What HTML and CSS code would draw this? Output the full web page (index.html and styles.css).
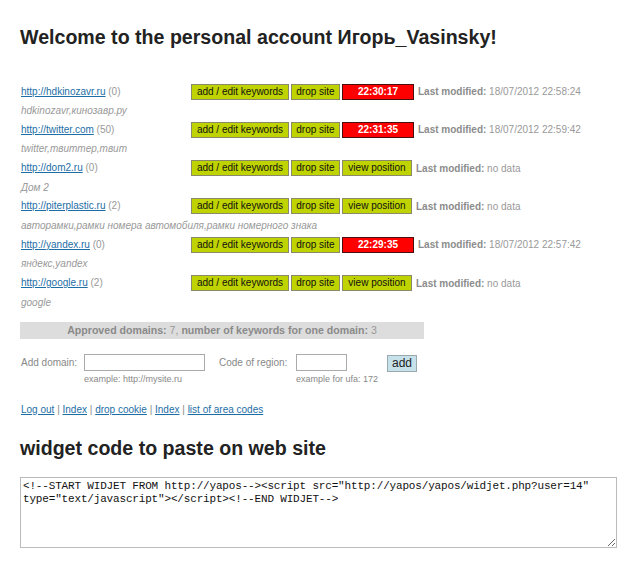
FILE: index.html
```html
<!DOCTYPE html>
<html lang="en">
<head>
<meta charset="utf-8">
<title>Personal account</title>
<link rel="stylesheet" href="styles.css">
</head>
<body>
<div class="page">
  <h1 class="title">Welcome to the personal account Игорь_Vasinsky!</h1>

  <div class="sites">
    <div class="site-row">
      <div class="url"><a href="#">http://hdkinozavr.ru</a> <span class="count">(0)</span></div>
      <div class="actions">
        <span class="btn btn-edit">add / edit keywords</span>
        <span class="btn btn-drop">drop site</span>
        <span class="btn time">22:30:17</span>
        <span class="modified"><b>Last modified:</b> 18/07/2012 22:58:24</span>
      </div>
    </div>
    <div class="keywords">hdkinozavr,кинозавр.ру</div>

    <div class="site-row">
      <div class="url"><a href="#">http://twitter.com</a> <span class="count">(50)</span></div>
      <div class="actions">
        <span class="btn btn-edit">add / edit keywords</span>
        <span class="btn btn-drop">drop site</span>
        <span class="btn time">22:31:35</span>
        <span class="modified"><b>Last modified:</b> 18/07/2012 22:59:42</span>
      </div>
    </div>
    <div class="keywords">twitter,твиттер,твит</div>

    <div class="site-row">
      <div class="url"><a href="#">http://dom2.ru</a> <span class="count">(0)</span></div>
      <div class="actions">
        <span class="btn btn-edit">add / edit keywords</span>
        <span class="btn btn-drop">drop site</span>
        <span class="btn view">view position</span>
        <span class="modified"><b>Last modified:</b> no data</span>
      </div>
    </div>
    <div class="keywords">Дом 2</div>

    <div class="site-row">
      <div class="url"><a href="#">http://piterplastic.ru</a> <span class="count">(2)</span></div>
      <div class="actions">
        <span class="btn btn-edit">add / edit keywords</span>
        <span class="btn btn-drop">drop site</span>
        <span class="btn view">view position</span>
        <span class="modified"><b>Last modified:</b> no data</span>
      </div>
    </div>
    <div class="keywords">авторамки,рамки номера автомобиля,рамки номерного знака</div>

    <div class="site-row">
      <div class="url"><a href="#">http://yandex.ru</a> <span class="count">(0)</span></div>
      <div class="actions">
        <span class="btn btn-edit">add / edit keywords</span>
        <span class="btn btn-drop">drop site</span>
        <span class="btn time">22:29:35</span>
        <span class="modified"><b>Last modified:</b> 18/07/2012 22:57:42</span>
      </div>
    </div>
    <div class="keywords">яндекс,yandex</div>

    <div class="site-row">
      <div class="url"><a href="#">http://google.ru</a> <span class="count">(2)</span></div>
      <div class="actions">
        <span class="btn btn-edit">add / edit keywords</span>
        <span class="btn btn-drop">drop site</span>
        <span class="btn view">view position</span>
        <span class="modified"><b>Last modified:</b> no data</span>
      </div>
    </div>
    <div class="keywords">google</div>
  </div>

  <div class="approved"><b>Approved domains:</b> 7, <b>number of keywords for one domain:</b> 3</div>

  <form class="add-form" onsubmit="return false;">
    <label class="label label-domain">Add domain:</label>
    <div class="field field-domain">
      <input class="input input-domain" type="text">
      <div class="hint">example: http://mysite.ru</div>
    </div>
    <label class="label label-region">Code of region:</label>
    <div class="field field-region">
      <input class="input input-region" type="text">
      <div class="hint">example for ufa: 172</div>
    </div>
    <button class="add-btn" type="submit">add</button>
  </form>

  <div class="links">
    <a href="#">Log out</a> | <a href="#">Index</a> | <a href="#">drop cookie</a> | <a href="#">Index</a> | <a href="#">list of area codes</a>
  </div>

  <h2 class="title title-widget">widget code to paste on web site</h2>

  <textarea class="code" spellcheck="false">&lt;!--START WIDJET FROM http://yapos--&gt;&lt;script src="http://yapos/yapos/widjet.php?user=14" type="text/javascript"&gt;&lt;/script&gt;&lt;!--END WIDJET--&gt;</textarea>
</div>
</body>
</html>
```

FILE: styles.css
```css
html, body {
  margin: 0;
  padding: 0;
  background: #ffffff;
}

body {
  font-family: "Liberation Sans", Arial, sans-serif;
  font-size: 10px;
  color: #888888;
}

.page {
  padding: 0 20px;
}

.title {
  margin: 0;
  font-size: 19.6px;
  line-height: 24px;
  font-weight: bold;
  color: #222222;
}

h1.title {
  padding-top: 25px;
}

.sites {
  margin-top: 33px;
}

.site-row {
  display: flex;
  align-items: center;
  height: 19px;
}

.url {
  width: 171px;
  flex: none;
  padding-left: 1px;
  box-sizing: border-box;
  color: #999999;
  line-height: 12px;
}

.url a, .links a {
  color: #1d6ea6;
  text-decoration: underline;
}

.actions {
  display: flex;
  align-items: center;
  gap: 2px;
}

.btn {
  display: inline-block;
  height: 16px;
  line-height: 14px;
  box-sizing: border-box;
  padding: 0;
  border: 1px solid #8a8a6a;
  background: #bfd300;
  color: #111111;
  text-align: center;
  white-space: nowrap;
}

.btn-edit {
  width: 98px;
}

.btn-drop {
  width: 49px;
}

.btn.time {
  width: 72px;
  background: #ff0000;
  border-color: #4a1010;
  color: #ffffff;
  font-weight: bold;
}

.btn.view {
  width: 70px;
}

.modified {
  margin-left: 2px;
  color: #999999;
  white-space: nowrap;
}

.modified b {
  color: #8c8c8c;
}

.keywords {
  height: 19.33px;
  line-height: 20px;
  padding-left: 1px;
  font-style: italic;
  color: #999999;
}

.approved {
  margin-top: 10px;
  width: 404px;
  height: 17px;
  line-height: 17px;
  background: #dddddd;
  text-align: center;
  font-size: 10.6px;
  color: #999999;
}

.approved b {
  color: #8a8a8a;
}

.add-form {
  display: flex;
  align-items: flex-start;
  margin: 15px 0 0;
}

.label {
  padding-top: 3px;
  padding-left: 1px;
  line-height: 12px;
  color: #888888;
}

.label-domain {
  width: 63px;
}

.label-region {
  width: 77px;
}

.field {
  display: flex;
  flex-direction: column;
}

.field-domain {
  width: 134px;
}

.field-region {
  width: 91px;
}

.input {
  box-sizing: border-box;
  height: 17px;
  margin: 0;
  padding: 0 2px;
  border: 1px solid #aaaaaa;
  background: #ffffff;
  font-family: "Liberation Sans", Arial, sans-serif;
  font-size: 10px;
}

.input-domain {
  width: 121px;
}

.input-region {
  width: 51px;
}

.hint {
  margin-top: 2px;
  font-size: 9px;
  line-height: 12px;
  color: #888888;
}

.add-btn {
  box-sizing: border-box;
  width: 30px;
  height: 17px;
  margin: 1px 0 0;
  padding: 0;
  border: 1px solid #9aa9ae;
  background: #c6e1ea;
  color: #222222;
  font-family: "Liberation Sans", Arial, sans-serif;
  font-size: 12px;
  line-height: 14px;
}

.links {
  margin-top: 19px;
  padding-left: 1px;
  line-height: 12px;
  color: #888888;
}

.title-widget {
  margin-top: 20px;
}

.code {
  display: block;
  box-sizing: border-box;
  width: 597px;
  height: 71px;
  margin-top: 17px;
  padding: 2px;
  border: 1px solid #bbbbbb;
  font-family: "Liberation Mono", "Courier New", monospace;
  font-size: 11px;
  letter-spacing: -0.17px;
  line-height: 13px;
  color: #111111;
  resize: both;
}
```
